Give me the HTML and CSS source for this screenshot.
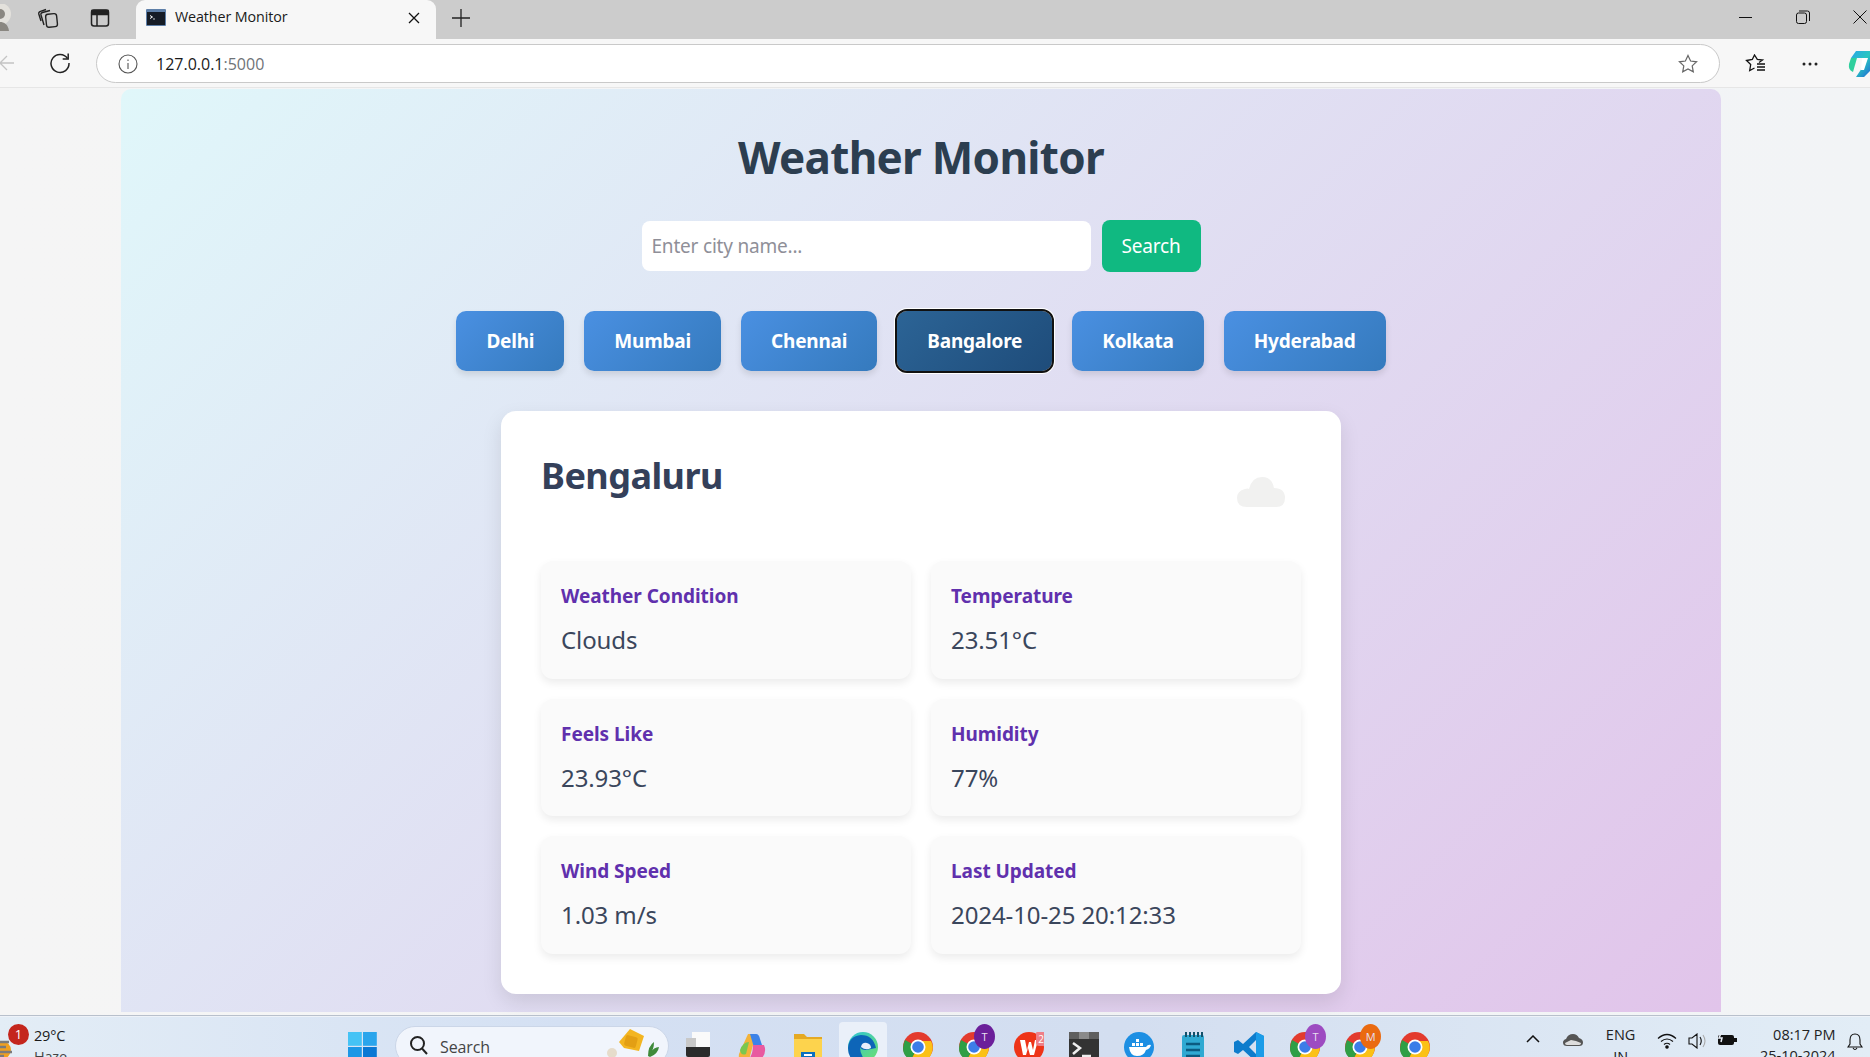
FILE: index.html
```html
<!DOCTYPE html>
<html lang="en">
<head>
<meta charset="utf-8">
<title>Weather Monitor</title>
<link rel="stylesheet" href="styles.css">
</head>
<body>
<div class="screen">
  <header class="tabstrip">
    <svg class="ic-profile" width="14" height="30" viewBox="0 0 14 30"><circle cx="0" cy="10" r="11" fill="#e3e1dc"/><circle cx="0" cy="10" r="5" fill="#8a8781"/><path d="M-8 27c0-7 4-9 8-9s8 2 9 9z" fill="#8a8781"/></svg>
    <svg class="ic-coll" width="22" height="22" viewBox="0 0 22 22" fill="none" stroke="#222" stroke-width="1.400"><rect x="9" y="7" width="11" height="13" rx="2.500" transform="rotate(-6 14 13)"/><path d="M7 18 4 8q-.5-2 1.500-2.500L13 3.500M4 14 1.800 7Q1.400 5 3.500 4.300L9 2.500"/></svg>
    <svg class="ic-side" width="20" height="20" viewBox="0 0 20 20" fill="none" stroke="#222" stroke-width="1.500"><rect x="1.500" y="2" width="17" height="16" rx="2.500"/><path d="M7 6.500V18"/><path d="M2 2.500h16v4H2z" fill="#222"/></svg>
    <div class="tab">
      <svg class="fav" width="20" height="17" viewBox="0 0 20 17"><rect width="20" height="17" rx="1" fill="#5e7fa8"/><rect x="1" y="3" width="18" height="13" fill="#161c26"/><path d="M4 6.500 6.500 8 4 9.500" stroke="#fff" fill="none"/><path d="M7 10h2" stroke="#ccc"/></svg>
      <span class="tab-title">Weather Monitor</span>
      <svg class="tab-x" width="12" height="12" viewBox="0 0 12 12" stroke="#111" stroke-width="1.300"><path d="M1 1l10 10M11 1 1 11"/></svg>
    </div>
    <svg class="ic-plus" width="18" height="18" viewBox="0 0 18 18" stroke="#222" stroke-width="1.300"><path d="M9 0v18M0 9h18"/></svg>
    <div class="winbtns">
      <svg width="14" height="14" viewBox="0 0 14 14" stroke="#111"><path d="M0 7.500h13"/></svg>
      <svg width="14" height="14" viewBox="0 0 14 14" stroke="#111" fill="none"><rect x=".5" y="3" width="10" height="10.500" rx="2"/><path d="M3 1h8.500Q13.500 1 13.500 3v8"/></svg>
      <svg width="14" height="14" viewBox="0 0 14 14" stroke="#111"><path d="M.5.500l13 13M13.500.500l-13 13"/></svg>
    </div>
  </header>

  <div class="toolbar">
    <svg class="ic-back" width="15" height="16" viewBox="0 0 15 16" fill="none" stroke="#c4c4c4" stroke-width="1.300"><path d="M8 1 1 8l7 7M1 8h14"/></svg>
    <svg class="ic-reload" width="22" height="22" viewBox="0 0 22 22" fill="none" stroke="#222" stroke-width="1.500"><path d="M18.500 6.500A9 9 0 1 0 20 11"/><path d="M19.200 1.500v5.500h-5.500"/></svg>
    <div class="omnibox">
      <svg class="ic-info" width="20" height="20" viewBox="0 0 20 20" fill="none" stroke="#555" stroke-width="1.100"><circle cx="10" cy="10" r="9"/><path d="M10 9v6M10 5.500v1.500"/></svg>
      <span class="url">127.0.0.1<span class="port">:5000</span></span>
      <svg class="ic-star" width="20" height="20" viewBox="0 0 20 20" fill="none" stroke="#666" stroke-width="1.200"><path d="M10 1.500l2.600 5.500 6 .8-4.400 4.100 1.100 6L10 15l-5.300 2.900 1.100-6L1.400 7.800l6-.8z"/></svg>
    </div>
    <svg class="ic-favs" width="21" height="20" viewBox="0 0 21 20" fill="none" stroke="#111" stroke-width="1.300"><path d="M14 8.500 17.500 6l-5.200-.6L9.500 1 7.300 5.500 1.500 6.500l4.200 4-1 6 4.800-2.500"/><path d="M12 10h8M12 13h8M12 16h8"/></svg>
    <svg class="ic-dots" width="16" height="4" viewBox="0 0 16 4" fill="#222"><circle cx="2" cy="2" r="1.500"/><circle cx="8" cy="2" r="1.500"/><circle cx="14" cy="2" r="1.500"/></svg>
    <svg class="ic-copilot" width="24" height="28" viewBox="0 0 24 28"><defs><linearGradient id="cop" x1="0" y1="0" x2="1" y2="1"><stop offset="0" stop-color="#2aa7e8"/><stop offset=".5" stop-color="#28c7c0"/><stop offset="1" stop-color="#1f5fd8"/></linearGradient></defs><path d="M8 1h16v18l-8 8H8l6-9V8H3z" fill="url(#cop)"/><path d="M3 8h6L5 22Q0 20 1 14z" fill="#2fcf9d"/><path d="M14 8h6l-4 12h-3z" fill="#fff"/></svg>
  </div>

  <main class="viewport">
    <div class="app">
      <h1 class="title">Weather Monitor</h1>
      <form class="search">
        <input class="search-input" type="text" placeholder="Enter city name...">
        <button class="search-btn" type="button">Search</button>
      </form>
      <nav class="cities">
        <button class="city" type="button">Delhi</button>
        <button class="city" type="button">Mumbai</button>
        <button class="city" type="button">Chennai</button>
        <button class="city active" type="button">Bangalore</button>
        <button class="city" type="button">Kolkata</button>
        <button class="city" type="button">Hyderabad</button>
      </nav>
      <section class="card">
        <div class="card-head">
          <h2 class="city-name">Bengaluru</h2>
          <svg class="cloud" width="48" height="30" viewBox="0 0 48 30" fill="#f1f1f0"><path d="M10 30Q0 30 0 21q0-7 8-9 3-1 4 0Q15 0 25 0q10 0 12 11 11 0 11 10 0 9-9 9z"/></svg>
        </div>
        <div class="grid">
          <div class="item"><h3 class="label">Weather Condition</h3><p class="value">Clouds</p></div>
          <div class="item"><h3 class="label">Temperature</h3><p class="value">23.51°C</p></div>
          <div class="item"><h3 class="label">Feels Like</h3><p class="value">23.93°C</p></div>
          <div class="item"><h3 class="label">Humidity</h3><p class="value">77%</p></div>
          <div class="item"><h3 class="label">Wind Speed</h3><p class="value">1.03 m/s</p></div>
          <div class="item"><h3 class="label">Last Updated</h3><p class="value">2024-10-25 20:12:33</p></div>
        </div>
      </section>
    </div>
  </main>

  <footer class="taskbar">
    <div class="weather">
      <svg class="haze" width="26" height="26" viewBox="0 0 26 26"><circle cx="8" cy="18" r="9" fill="#f0a020"/><path d="M0 10h15M0 15h12M4 20h14M0 24h10" stroke="#7b7b7b" stroke-width="2.500"/></svg>
      <span class="badge">1</span>
      <div class="weather-text"><span>29°C</span><span>Haze</span></div>
    </div>
    <svg class="winlogo" width="29" height="29" viewBox="0 0 29 29"><rect width="13.800" height="13.800" fill="#45c3f5"/><rect x="15" width="13.800" height="13.800" fill="#2aa5ec"/><rect y="15" width="13.800" height="13.800" fill="#1c97e6"/><rect x="15" y="15" width="13.800" height="13.800" fill="#0a78d4"/></svg>
    <div class="tb-search">
      <svg width="20" height="20" viewBox="0 0 20 20" fill="none" stroke="#222" stroke-width="2"><circle cx="8.500" cy="8.500" r="6.500"/><path d="M13 13.500l5 5.500"/></svg>
      <span>Search</span>
      <svg class="bing" width="62" height="30" viewBox="0 0 62 30"><circle cx="8" cy="26" r="5" fill="#e6dccb"/><path d="M26 2l14 7-5 15-15-3-5-6z" fill="#f3b521"/><rect x="21" y="9" width="12" height="11" rx="2" fill="#e39f14" transform="rotate(15 27 14)"/><path d="M44 29q0-10 6-14 0 8-4 11 4-6 9-6-1 7-9 10z" fill="#3f8a3a"/></svg>
    </div>
    <div class="apps">
      <div class="app-ic"><svg width="24" height="25" viewBox="0 0 24 25"><rect x="0" y="6" width="24" height="19" rx="2" fill="#2b2b2b"/><rect x="6" y="0" width="18" height="15" fill="#fafafa"/><rect x="0" y="6" width="10" height="9" fill="#c8c8c8"/></svg></div>
      <div class="app-ic"><svg width="30" height="30" viewBox="0 0 30 30"><path d="M10 2h8l-7 26H4Q0 28 1 22z" fill="#f3b33a"/><path d="M12 2h6q3 0 4 5l4 12h-9z" fill="#3b82e8"/><path d="M2 18q3-8 9-8l-3 12q-5 2-6-4z" fill="#7ac74f"/><path d="M15 13h11q3 7-2 13-2 3-7 3H9q6-5 6-16z" fill="#e85aa0"/></svg></div>
      <div class="app-ic"><svg width="30" height="30" viewBox="0 0 30 30"><path d="M1 2h10l3 3h15v25H1z" fill="#e5a923"/><path d="M1 7h28v23H1z" fill="#fdd34d"/><rect x="8" y="20" width="14" height="10" fill="#0b6fc0"/><rect x="11" y="22" width="8" height="2" fill="#fff"/></svg></div>
      <div class="app-ic on"><svg width="30" height="30" viewBox="0 0 30 30"><defs><linearGradient id="edge" x1="0" y1="0" x2="1" y2="1"><stop offset="0" stop-color="#2dc3d6"/><stop offset="1" stop-color="#6ee06e"/></linearGradient></defs><circle cx="15" cy="15" r="15" fill="url(#edge)"/><path d="M0 16Q1 4 13 3q12 0 15 13l-10 2q-5 0-6-3 0 10 8 15H14Q0 30 0 16z" fill="#0d65b8"/><path d="M13 15q1-5 6-4 4 1 4 5-5 3-10-1z" fill="#e9f0fb"/></svg></div>
      <div class="app-ic"><svg class="chrome" width="30" height="30" viewBox="0 0 30 30"><use href="#chrome"/></svg></div>
      <div class="app-ic"><svg class="chrome" width="30" height="30" viewBox="0 0 30 30"><use href="#chrome"/></svg><span class="pip pip-dark">T</span></div>
      <div class="app-ic"><svg class="wps" width="30" height="30" viewBox="0 0 30 30"><circle cx="15" cy="15" r="15" fill="#ee3418"/><path d="M6 8h5l2 10 2-8h2l2 8 2-10h3l-4 15h-4l-2-7-2 7H9z" fill="#fff"/><rect x="22" y="-1" width="10" height="15" rx="3" fill="#ee7f88"/><text x="27" y="11" class="pip-num">2</text></svg></div>
      <div class="app-ic"><svg width="30" height="30" viewBox="0 0 30 30"><rect width="30" height="30" rx="2" fill="#333"/><rect width="30" height="7" fill="#5f5f5f"/><rect x="10" width="10" height="7" fill="#8a8a8a"/><path d="M4 11l7 5-7 6" stroke="#eee" stroke-width="2.500" fill="none"/><path d="M13 24h9" stroke="#eee" stroke-width="2.500"/></svg></div>
      <div class="app-ic"><svg width="30" height="30" viewBox="0 0 30 30"><circle cx="15" cy="15" r="15" fill="#1d8fe3"/><path d="M5 15h17q2-3 5-2-1 4-5 5-2 6-9 6-7 0-8-9z" fill="#fff"/><path d="M8 11h3v3H8zM12 11h3v3h-3zM16 11h3v3h-3zM12 7h3v3h-3z" fill="#fff"/></svg></div>
      <div class="app-ic"><svg width="24" height="32" viewBox="0 0 24 32"><rect y="3" width="22" height="29" rx="2" fill="#2fa9d2"/><path d="M4 0v5M8 0v5M12 0v5M16 0v5M20 0v5" stroke="#13506a" stroke-width="2"/><path d="M4 12h14M4 18h14M4 24h14" stroke="#0b5a80" stroke-width="2.500"/></svg></div>
      <div class="app-ic"><svg width="30" height="30" viewBox="0 0 30 30"><path d="M22 0l8 4v22l-8 4-13-12-5 4-4-2V10l4-2 5 4zM22 8l-7 7 7 7z" fill="#0e7ccc"/><path d="M22 0l8 4v22l-8 4z" fill="#1b9ce8"/></svg></div>
      <div class="app-ic"><svg class="chrome" width="30" height="30" viewBox="0 0 30 30"><use href="#chrome"/></svg><span class="pip pip-light">T</span></div>
      <div class="app-ic"><svg class="chrome" width="30" height="30" viewBox="0 0 30 30"><use href="#chrome"/></svg><span class="pip pip-orange">M</span></div>
      <div class="app-ic"><svg class="chrome" width="30" height="30" viewBox="0 0 30 30"><use href="#chrome"/></svg></div>
    </div>
    <div class="tray">
      <svg class="tr-up" width="14" height="8" viewBox="0 0 14 8" fill="none" stroke="#111" stroke-width="1.500"><path d="M1 7l6-6 6 6"/></svg>
      <svg class="tr-cloud" width="20" height="14" viewBox="0 0 20 14"><path d="M4 13Q0 13 0 9.500 0 7 3 6q2-5 7-5 4 0 6 4 4 1 4 4.500T16 13z" fill="#555"/><path d="M2 10l6-3 5 1 5 2q0 2-3 2H4q-2 0-2-2z" fill="#ddd"/></svg>
      <div class="lang"><span>ENG</span><span>IN</span></div>
      <svg class="tr-wifi" width="20" height="16" viewBox="0 0 20 16" fill="none" stroke="#111" stroke-width="1.200"><path d="M1 5.500q9-8 18 0M4 8.500q6-5 12 0M7 11.500q3-2.500 6 0"/><circle cx="10" cy="14" r="1.200" fill="#111"/></svg>
      <svg class="tr-vol" width="20" height="16" viewBox="0 0 20 16" fill="none" stroke="#111" stroke-width="1.100"><path d="M1 5h3l5-4v14l-5-4H1zM12 4q2.500 4 0 8"/><path d="M15 2q4 6 0 12" stroke="#aaa"/></svg>
      <svg class="tr-bat" width="20" height="16" viewBox="0 0 20 16"><rect x="1" y="4" width="16" height="10" rx="2" fill="#111"/><rect x="17" y="7" width="3" height="4" fill="#111"/><path d="M5 0 2 7h3L4 11" stroke="#e8eef7" stroke-width="1.500" fill="none"/></svg>
      <div class="clock"><span>08:17 PM</span><span>25-10-2024</span></div>
      <svg class="tr-bell" width="16" height="18" viewBox="0 0 16 18" fill="none" stroke="#111" stroke-width="1.100"><path d="M8 1Q3 1 3 7v4l-2 3h14l-2-3V7Q13 1 8 1zM6 15q2 3 4 0"/></svg>
    </div>
    <svg class="defs" width="0" height="0"><defs><g id="chrome"><circle cx="15" cy="15" r="15" fill="#e33b2e"/><path d="M15 15 2 8Q-4 22 8 28z" fill="#2f9f46"/><path d="M15 15l-7 13q16 7 21-8 2-6-1-11H15z" fill="#fbc116"/><circle cx="15" cy="15" r="7.500" fill="#fff"/><circle cx="15" cy="15" r="5.800" fill="#3b7de8"/></g></defs></svg>
  </footer>
</div>
</body>
</html>
```
FILE: styles.css
```css
* { box-sizing: border-box; }
html, body { margin: 0; padding: 0; height: 100%; overflow: hidden; }
body { font-family: "Noto Sans", "Open Sans", sans-serif; }
.screen { width: 1870px; height: 1057px; display: flex; flex-direction: column; overflow: hidden; }

/* browser chrome */
.tabstrip { height: 39px; flex: none; background: #cccccc; display: flex; align-items: center; }
.ic-profile { flex: none; margin-right: 23px; margin-top: -2px; }
.ic-coll { flex: none; margin-right: 31px; margin-top: -4px; }
.ic-side { flex: none; margin-right: 26px; margin-top: -4px; }
.tab { width: 300px; height: 39px; background: #f7f7f7; border-radius: 9px 9px 0 0; display: flex; align-items: center; padding: 0 13px 0 10px; }
.fav { flex: none; margin-right: 9px; margin-top: -4px; }
.tab-title { font-family: "Open Sans", sans-serif; font-size: 14.300px; color: #1a1a1a; flex: 1; margin-top: -6px; letter-spacing: -.1px; }
.tab-x { flex: none; margin-right: 3px; margin-top: -3px; }
.ic-plus { flex: none; margin-left: 16px; margin-top: -4px; }
.winbtns { margin-left: auto; display: flex; gap: 43px; padding-right: 3px; margin-top: -5px; }

.toolbar { height: 49px; flex: none; background: #f7f7f7; border-bottom: 1px solid #e6e6e6; display: flex; align-items: center; }
.ic-back { flex: none; margin-right: 35px; margin-top: 0; margin-left: -1px; }
.ic-reload { flex: none; margin-right: 25px; margin-top: 0; }
.omnibox { width: 1624px; height: 39px; margin-top: 1px; flex: none; background: #fff; border: 1px solid #c9c9c9; border-radius: 20px; display: flex; align-items: center; padding: 0 16px 0 21px; }
.ic-info { flex: none; margin-right: 18px; }
.url { font-family: "Open Sans", sans-serif; font-size: 16px; color: #1a1a1a; flex: 1; letter-spacing: 0; margin-top: 1px; }
.port { color: #6f7378; }
.ic-star { flex: none; margin-right: 5px; }
.ic-favs { flex: none; margin-left: 25px; margin-top: 1px; }
.ic-dots { flex: none; margin-left: 36px; margin-top: 1px; }
.ic-copilot { flex: none; margin-left: 30px; margin-top: 1px; }

/* page */
.viewport { flex: 1; min-height: 0; background: linear-gradient(90deg, #f5f5f5, #f2f4f6); padding: 1px 28px 3px 0; }
.app { width: 1600px; height: 100%; margin: 0 auto; border-radius: 10px 10px 0 0; background: linear-gradient(135deg, #e0f7fa, #e1c4ea); padding-top: 38px; display: flex; flex-direction: column; align-items: center; }
.title { margin: 0; font-size: 44px; line-height: 60px; font-weight: 700; color: #2c3e50; letter-spacing: -.7px; }
.search { display: flex; align-items: center; gap: 11px; margin-top: 33px; }
.search-input { width: 449px; height: 50px; border: 0; border-radius: 8px; background: #fff; padding: 0 10px; font: 19px "Noto Sans", sans-serif; letter-spacing: -.2px; }
.search-input::placeholder { color: #8f8f98; opacity: 1; }
.search-btn { width: 99px; height: 52px; border: 0; border-radius: 8px; background: #10b981; color: #fff; font: 19px "Noto Sans", sans-serif; letter-spacing: -.2px; }
.cities { display: flex; gap: 20px; margin-top: 39px; }
.city { height: 60px; padding: 0 30px; border: 0; border-radius: 10px; color: #fff; font: 700 19px "Noto Sans", sans-serif; letter-spacing: -.2px; background: linear-gradient(135deg, #4a90e2, #357abd); box-shadow: 0 4px 6px rgba(0, 0, 0, .1); }
.city.active { background: linear-gradient(135deg, #2c6496, #1e4c7a); outline: 2px solid #111; outline-offset: 0; box-shadow: 0 0 0 3px #fff; }

.card { width: 840px; margin-top: 40px; background: #fff; border-radius: 15px; padding: 40px; box-shadow: 0 8px 20px rgba(0, 0, 0, .1); }
.card-head { display: flex; justify-content: space-between; height: 110px; }
.city-name { margin: 0; font-size: 36px; line-height: 50px; font-weight: 700; color: #34405a; letter-spacing: -.55px; }
.cloud { margin: 26px 16px 0 0; flex: none; }
.grid { display: grid; grid-template-columns: 370px 370px; gap: 20px; }
.item { height: 117.500px; background: #fafafa; border-radius: 12px; padding: 21px 20px 20px; box-shadow: 0 4px 8px rgba(0, 0, 0, .08); }
.label { margin: 0; font-size: 19px; line-height: 28px; font-weight: 700; color: #6030ad; letter-spacing: -.05px; }
.value { margin: 14px 0 0; font-size: 24px; line-height: 32px; color: #3a465c; letter-spacing: -.1px; }

/* taskbar */
.taskbar { position: relative; height: 42px; flex: none; overflow: hidden; display: flex; align-items: flex-start; border-top: 1px solid #b8c0cc; box-shadow: inset 0 1px 0 #eef2f8; background: linear-gradient(90deg, #e3edf6, #d4e0f3 30%, #d3def0 60%, #e2edf6); }
.weather { position: relative; width: 348px; flex: none; display: flex; height: 41px; }
.haze { position: absolute; left: -6px; top: 16px; }
.badge { position: absolute; left: 8px; top: 8px; width: 21px; height: 21px; border-radius: 50%; background: #c4261d; color: #fff; font: 13px/21px "Open Sans", sans-serif; text-align: center; }
.weather-text { margin-left: 34px; margin-top: 11px; display: flex; flex-direction: column; font: 14.500px/18px "Open Sans", sans-serif; color: #1a1a1a; letter-spacing: -.2px; }
.weather-text span + span { color: #444; margin-top: 3px; }
.winlogo { flex: none; margin-top: 16px; }
.tb-search { flex: none; margin: 10px 0 0 18px; width: 274px; height: 40px; border-radius: 20px; background: #f1f5fc; border: 1px solid #cbd6e8; display: flex; align-items: center; padding: 0 6px 8px 13px; position: relative; }
.tb-search span { font: 16px "Open Sans", sans-serif; color: #444; margin-left: 11px; margin-top: 9px; flex: 1; letter-spacing: -.1px; }
.tb-search svg { flex: none; margin-top: 6px; }
.tb-search .bing { margin-top: 0; position: absolute; right: 2px; top: 0; }
.apps { display: flex; margin-left: 1px; }
.app-ic { position: relative; flex: none; width: 55.200px; height: 41px; padding-top: 16px; display: flex; justify-content: center; align-items: flex-start; }
.app-ic.on { background: #eaf0f9; border-radius: 4px; margin-top: 6px; padding-top: 10px; width: 48px; margin-left: 3.600px; margin-right: 3.600px; }
.pip { position: absolute; left: 28px; top: 8px; width: 21px; height: 25px; border-radius: 50%; color: #e7dff0; font: 11px/25px "Open Sans", sans-serif; text-align: center; }
.pip-dark { background: #6b1f9a; }
.pip-light { background: #9d4bc1; }
.pip-orange { background: #ea6a10; }
.pip-num { font: 10px "Open Sans", sans-serif; fill: #fff; text-anchor: middle; }
.tray { flex: 1; display: flex; align-items: flex-start; min-width: 0; position: relative; }
.tr-up { flex: none; margin: 19px 0 0 83px; }
.tr-cloud { flex: none; margin: 17px 0 0 23px; }
.lang { flex: none; margin: 9px 0 0 22px; width: 32px; display: flex; flex-direction: column; align-items: center; font: 14.500px/20px "Open Sans", sans-serif; color: #222; }
.lang span + span { margin-top: 2px; }
.tr-wifi { flex: none; margin: 17px 0 0 20px; }
.tr-vol { flex: none; margin: 17px 0 0 11px; }
.tr-bat { flex: none; margin: 15px 0 0 9px; }
.clock { flex: none; margin: 9px 0 0 23px; width: 76px; display: flex; flex-direction: column; align-items: flex-end; font: 14.500px/20px "Open Sans", sans-serif; color: #222; white-space: nowrap; }
.clock span + span { margin-top: 1px; }
.tr-bell { flex: none; margin: 17px 0 0 11px; }
.defs { position: absolute; }
```
